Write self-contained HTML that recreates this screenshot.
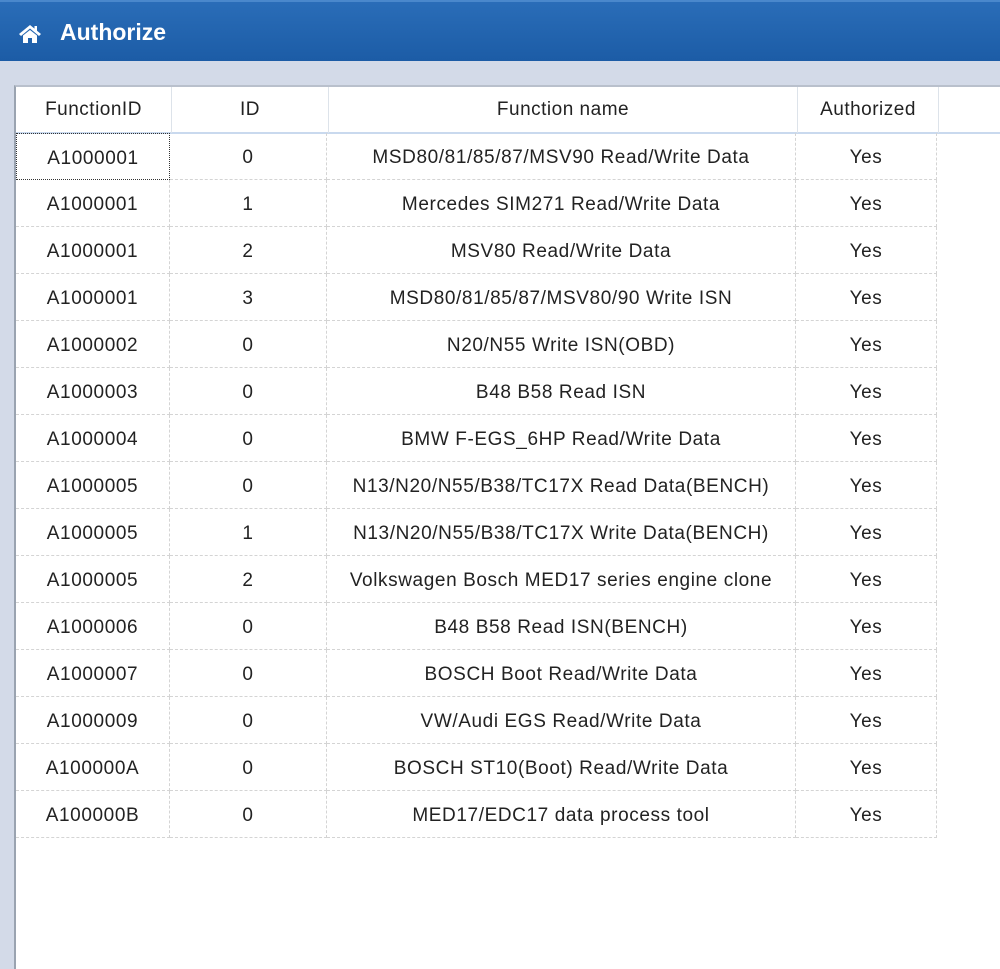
<!DOCTYPE html>
<html><head><meta charset="utf-8"><style>
*{margin:0;padding:0;box-sizing:border-box}
body{width:1000px;height:969px;overflow:hidden;background:#d3dae8;font-family:"Liberation Sans",sans-serif;position:relative}
.title{position:absolute;left:0;top:0;width:1000px;height:61px;background:linear-gradient(#2a6db8,#1c5ca6);border-top:2px solid #4a88cc}
.title span{position:absolute;left:60px;top:17px;color:#fff;font-weight:bold;font-size:23px}
.title svg{position:absolute;left:18px;top:22px}
.panel{position:absolute;left:14px;top:85px;width:986px;height:884px;background:#fff;border-left:2px solid #9aa3b0;border-top:2px solid #b9c0cc}
.hdr{position:absolute;left:0;top:0;width:986px;height:47px;border-bottom:2px solid #c9d9ee}
.hc{position:absolute;top:0;height:46px;line-height:46px;text-align:center;font-size:19px;letter-spacing:0.5px;color:#222;border-right:1px solid #dde3ea}
.row{position:absolute;left:0;height:47px}
.c{position:absolute;top:0;height:47px;line-height:49px;text-align:center;font-size:19px;letter-spacing:0.6px;color:#222;border-right:1px dashed #d4d4d4;border-bottom:1px dashed #d4d4d4}
</style></head><body>
<div class="title">
<svg width="24" height="20" viewBox="0 0 24 20"><path d="M12 1 L1 10 L3 12 L12 4.5 L21 12 L23 10 L19 6.7 V2 H16.5 V4.6 Z" fill="#fff"/><path d="M5 11.5 L12 6 L19 11.5 V19 H14 V14 H10 V19 H5 Z" fill="#fff"/></svg>
<span>Authorize</span></div>
<div class="panel">
<div class="hdr">
<div class="hc" style="left:0;width:156px">FunctionID</div>
<div class="hc" style="left:156px;width:157px">ID</div>
<div class="hc" style="left:313px;width:469px">Function name</div>
<div class="hc" style="left:782px;width:141px">Authorized</div>
</div>
</div>
<div style="position:absolute;left:16px;top:133px">
<div class="row" style="top:0"><div class="c" style="left:0;width:154px;border:1px dotted #333">A1000001</div><div class="c" style="left:154px;width:157px">0</div><div class="c" style="left:311px;width:469px">MSD80/81/85/87/MSV90 Read/Write Data</div><div class="c" style="left:780px;width:141px">Yes</div></div>
<div class="row" style="top:47px"><div class="c" style="left:0;width:154px">A1000001</div><div class="c" style="left:154px;width:157px">1</div><div class="c" style="left:311px;width:469px">Mercedes SIM271 Read/Write Data</div><div class="c" style="left:780px;width:141px">Yes</div></div>
<div class="row" style="top:94px"><div class="c" style="left:0;width:154px">A1000001</div><div class="c" style="left:154px;width:157px">2</div><div class="c" style="left:311px;width:469px">MSV80 Read/Write Data</div><div class="c" style="left:780px;width:141px">Yes</div></div>
<div class="row" style="top:141px"><div class="c" style="left:0;width:154px">A1000001</div><div class="c" style="left:154px;width:157px">3</div><div class="c" style="left:311px;width:469px">MSD80/81/85/87/MSV80/90 Write ISN</div><div class="c" style="left:780px;width:141px">Yes</div></div>
<div class="row" style="top:188px"><div class="c" style="left:0;width:154px">A1000002</div><div class="c" style="left:154px;width:157px">0</div><div class="c" style="left:311px;width:469px">N20/N55 Write ISN(OBD)</div><div class="c" style="left:780px;width:141px">Yes</div></div>
<div class="row" style="top:235px"><div class="c" style="left:0;width:154px">A1000003</div><div class="c" style="left:154px;width:157px">0</div><div class="c" style="left:311px;width:469px">B48 B58 Read ISN</div><div class="c" style="left:780px;width:141px">Yes</div></div>
<div class="row" style="top:282px"><div class="c" style="left:0;width:154px">A1000004</div><div class="c" style="left:154px;width:157px">0</div><div class="c" style="left:311px;width:469px">BMW F-EGS_6HP Read/Write Data</div><div class="c" style="left:780px;width:141px">Yes</div></div>
<div class="row" style="top:329px"><div class="c" style="left:0;width:154px">A1000005</div><div class="c" style="left:154px;width:157px">0</div><div class="c" style="left:311px;width:469px">N13/N20/N55/B38/TC17X Read Data(BENCH)</div><div class="c" style="left:780px;width:141px">Yes</div></div>
<div class="row" style="top:376px"><div class="c" style="left:0;width:154px">A1000005</div><div class="c" style="left:154px;width:157px">1</div><div class="c" style="left:311px;width:469px">N13/N20/N55/B38/TC17X Write Data(BENCH)</div><div class="c" style="left:780px;width:141px">Yes</div></div>
<div class="row" style="top:423px"><div class="c" style="left:0;width:154px">A1000005</div><div class="c" style="left:154px;width:157px">2</div><div class="c" style="left:311px;width:469px">Volkswagen Bosch MED17 series engine clone</div><div class="c" style="left:780px;width:141px">Yes</div></div>
<div class="row" style="top:470px"><div class="c" style="left:0;width:154px">A1000006</div><div class="c" style="left:154px;width:157px">0</div><div class="c" style="left:311px;width:469px">B48 B58 Read ISN(BENCH)</div><div class="c" style="left:780px;width:141px">Yes</div></div>
<div class="row" style="top:517px"><div class="c" style="left:0;width:154px">A1000007</div><div class="c" style="left:154px;width:157px">0</div><div class="c" style="left:311px;width:469px">BOSCH Boot Read/Write Data</div><div class="c" style="left:780px;width:141px">Yes</div></div>
<div class="row" style="top:564px"><div class="c" style="left:0;width:154px">A1000009</div><div class="c" style="left:154px;width:157px">0</div><div class="c" style="left:311px;width:469px">VW/Audi EGS Read/Write Data</div><div class="c" style="left:780px;width:141px">Yes</div></div>
<div class="row" style="top:611px"><div class="c" style="left:0;width:154px">A100000A</div><div class="c" style="left:154px;width:157px">0</div><div class="c" style="left:311px;width:469px">BOSCH ST10(Boot) Read/Write Data</div><div class="c" style="left:780px;width:141px">Yes</div></div>
<div class="row" style="top:658px"><div class="c" style="left:0;width:154px">A100000B</div><div class="c" style="left:154px;width:157px">0</div><div class="c" style="left:311px;width:469px">MED17/EDC17 data process tool</div><div class="c" style="left:780px;width:141px">Yes</div></div>
</div>
</body></html>
